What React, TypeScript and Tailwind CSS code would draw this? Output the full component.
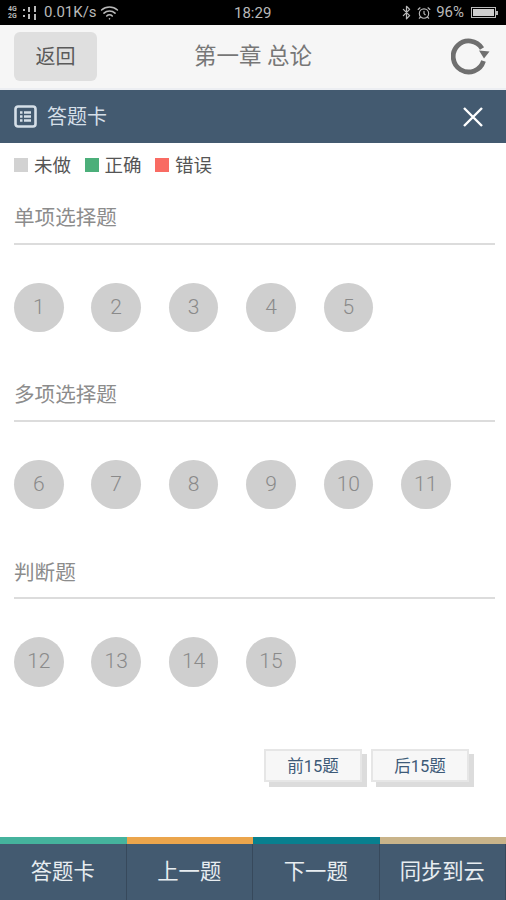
import { Bluetooth, Wifi, AlarmClock } from 'lucide-react';

const SECTIONS = [
  { title: '单项选择题', nums: [1, 2, 3, 4, 5] },
  { title: '多项选择题', nums: [6, 7, 8, 9, 10, 11] },
  { title: '判断题', nums: [12, 13, 14, 15] },
];

const TABS = [
  { label: '答题卡', stripe: 'bg-[#45b39d]' },
  { label: '上一题', stripe: 'bg-[#eba54c]' },
  { label: '下一题', stripe: 'bg-[#08808f]' },
  { label: '同步到云', stripe: 'bg-[#c9b48a]' },
];

const FONT = "font-['Roboto','Noto_Sans_CJK_SC',sans-serif]";

function StatusBar() {
  return (
    <div className="h-[25px] bg-black flex items-center justify-between pl-[8px] pr-[8px] text-[#b9b9b9] text-[15px] relative">
      <div className="flex items-center">
        <div className="flex flex-col text-[7px] leading-[7px] font-bold w-[13px]">
          <span>4G</span>
          <span>2G</span>
        </div>
        <svg width="17" height="14" viewBox="0 0 17 14" fill="#b9b9b9" className="ml-[1px]">
          <rect x="1" y="3" width="2" height="2" />
          <rect x="1" y="9" width="2" height="2" />
          <rect x="6" y="1" width="2" height="5" />
          <rect x="6" y="8" width="2" height="5" />
          <rect x="12" y="0" width="2" height="6" />
          <rect x="12" y="8" width="2" height="6" />
        </svg>
        <span className="ml-[5px]">0.01K/s</span>
        <Wifi size={19} strokeWidth={2} className="ml-[3px]" />
      </div>
      <span className="absolute left-[234px] top-[2px]">18:29</span>
      <div className="flex items-center">
        <Bluetooth size={15} strokeWidth={2} />
        <AlarmClock size={14} strokeWidth={2} className="ml-[3px]" />
        <span className="ml-[5px]">96%</span>
        <div className="ml-[7px] w-[25px] h-[11px] border border-[#b9b9b9] p-[1px]">
          <div className="w-full h-full bg-[#cfcfcf]" />
        </div>
        <span className="w-[2px] h-[4px] bg-[#b9b9b9]" />
      </div>
    </div>
  );
}

function NavBar() {
  return (
    <div className="h-[65px] bg-[#f6f6f6] flex items-center justify-between pl-[14px] pr-[15px] border-b-2 border-[#eceef2]">
      <div className="w-[83px] h-[49px] rounded-[6px] bg-[#dfdfdf] flex items-center justify-center text-[20px] text-[#5a5a5a]">
        返回
      </div>
      <span className="text-[22.5px] text-[#777] pr-[42px]">第一章 总论</span>
      <svg width="40" height="40" viewBox="0 0 40 40" fill="none">
        <path d="M31 11.5A15.5 15.5 0 1 0 32.5 24" stroke="#6f6f6f" strokeWidth="4.8" />
        <path d="M28 13.5L38.5 14.5L33 21.5Z" fill="#6f6f6f" />
      </svg>
    </div>
  );
}

function CardHeader() {
  return (
    <div className="h-[53px] bg-[#435a70] flex items-center justify-between pl-[14px] pr-[23px]">
      <div className="flex items-center">
        <svg width="23" height="23" viewBox="0 0 23 23" fill="none">
          <rect x="1.5" y="1.5" width="20" height="20" rx="2.5" stroke="#d5dfe8" strokeWidth="2.6" />
          <path d="M6 7.5h2.5M10 7.5h7M6 11.5h2.5M10 11.5h7M6 15.5h2.5M10 15.5h7" stroke="#d5dfe8" strokeWidth="2.4" />
        </svg>
        <span className="ml-[10px] text-[20px] text-[#d5dfe8]">答题卡</span>
      </div>
      <svg width="20" height="20" viewBox="0 0 20 20" fill="none">
        <path d="M1 1L19 19M19 1L1 19" stroke="#ffffff" strokeWidth="2.4" />
      </svg>
    </div>
  );
}

function Legend() {
  const items = [
    { label: '未做', color: 'bg-[#d2d2d2]' },
    { label: '正确', color: 'bg-[#4caf7a]' },
    { label: '错误', color: 'bg-[#f96b63]' },
  ];
  return (
    <div className="h-[44px] flex items-center pl-[14px] gap-[13.5px] text-[18.5px] text-[#555]">
      {items.map(i => (
        <div key={i.label} className="flex items-center gap-[6px]">
          <span className={`w-[14px] h-[14px] ${i.color}`} />
          <span className="pt-[3px]">{i.label}</span>
        </div>
      ))}
    </div>
  );
}

function Section({ title, nums }: { title: string; nums: number[] }) {
  return (
    <div className="h-[177.4px]">
      <div className="mx-[14px] mr-[11px] h-[57px] border-b-2 border-[#dcdcdc] flex items-center pt-[7px] text-[20.6px] text-[#8c8c8c]">
        {title}
      </div>
      <div className="flex gap-[27.8px] pl-[14px] pt-[38px]">
        {nums.map(n => (
          <div key={n} className="w-[49.6px] h-[49.6px] rounded-full bg-[#cfcfcf] flex items-center justify-center text-[21px] font-light text-[#8a8a8a]">
            {n}
          </div>
        ))}
      </div>
    </div>
  );
}

function PageButton({ label }: { label: string }) {
  return (
    <div className="w-[98px] h-[33px] pt-[3px] bg-[#f7f7f7] border-2 border-[#e6e6e6] shadow-[5px_5px_0_#dcdcdc] flex items-center justify-center text-[16.5px] text-[#3d5a78]">
      {label}
    </div>
  );
}

export default function App() {
  return (
    <div className={`w-[506px] h-[900px] bg-white flex flex-col overflow-hidden ${FONT}`}>
      <StatusBar />
      <NavBar />
      <CardHeader />
      <Legend />
      <div className="mt-[0.5px]">
        {SECTIONS.map(s => <Section key={s.title} title={s.title} nums={s.nums} />)}
      </div>
      <div className="flex justify-end gap-[9px] pr-[37px] mt-[29.5px]">
        <PageButton label="前15题" />
        <PageButton label="后15题" />
      </div>
      <div className="mt-auto grid grid-cols-4">
        {TABS.map(t => (
          <div key={t.label} className="flex flex-col">
            <div className={`h-[7px] ${t.stripe}`} />
            <div className="h-[56px] bg-[#435a70] border-r border-[#37495c] flex items-center justify-center text-[21.3px] text-[#e8edf1]">
              {t.label}
            </div>
          </div>
        ))}
      </div>
    </div>
  );
}
